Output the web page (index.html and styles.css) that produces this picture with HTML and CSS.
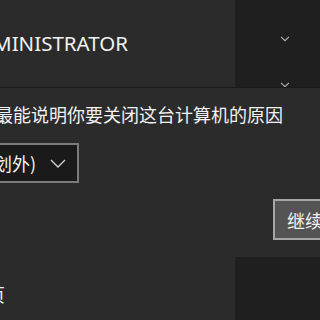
FILE: index.html
```html
<!DOCTYPE html>
<html lang="zh-CN">
<head>
  <meta charset="UTF-8" />
  <title>关闭 Windows</title>
  <link rel="stylesheet" href="styles.css">
</head>
<body>

  <div class="top">
    <div class="account">
      <span class="user-name">ADMINISTRATOR</span>
    </div>
    <div class="side">
      <svg class="chev" width="12" height="7" viewBox="0 0 12 7"><path d="M1 1 L6 6 L11 1" fill="none" stroke="#b5b5b5" stroke-width="1.3"/></svg>
      <svg class="chev" width="12" height="7" viewBox="0 0 12 7"><path d="M1 1 L6 6 L11 1" fill="none" stroke="#b5b5b5" stroke-width="1.3"/></svg>
    </div>
  </div>

  <div class="dialog">
    <p class="prompt">选择最能说明你要关闭这台计算机的原因</p>
    <div class="select">
      <span class="select-text">其他(计划外)</span>
      <svg width="16" height="9" viewBox="0 0 16 9"><path d="M1 1 L8 8 L15 1" fill="none" stroke="#cfcfcf" stroke-width="1.4"/></svg>
    </div>
    <div class="actions">
      <button class="btn">继续</button>
    </div>
  </div>

  <div class="bottom">
    <div class="account">
      <span class="page-label">页</span>
    </div>
  </div>

</body>
</html>
```

FILE: styles.css
```css
* { margin: 0; padding: 0; box-sizing: border-box; }
body {
  font-family: "Noto Sans", "Noto Sans CJK SC", sans-serif;
  background-color: #1f1f1f;
  color: white;
  height: 320px;
  overflow: hidden;
}
.top {
  height: 87px;
  display: flex;
}
.account {
  width: 235px;
  background-color: #2b2b2b;
  overflow: hidden;
}
.top .account {
  padding-top: 29px;
}
.user-name {
  display: block;
  margin-left: -35px;
  font-size: 20.5px;
  white-space: nowrap;
  color: #f2f2f2;
}
.side {
  flex: 1;
  display: flex;
  flex-direction: column;
  align-items: center;
  padding-top: 36px;
  gap: 40px;
  padding-left: 15px;
}
.dialog {
  height: 170px;
  background-color: #2b2b2b;
  border-top: 1px solid #1a1a1a;
  padding-top: 14px;
  overflow: hidden;
}
.prompt {
  margin-left: -41px;
  font-size: 18px;
  line-height: 24px;
  white-space: nowrap;
  color: #f2f2f2;
  font-family: "Noto Sans CJK SC", sans-serif;
}
.select {
  margin-top: 17px;
  margin-left: -80px;
  width: 159px;
  height: 40px;
  border: 2px solid #7b7b7b;
  background-color: #1a1a1a;
  display: flex;
  align-items: center;
  justify-content: flex-end;
  gap: 14px;
  padding-right: 11px;
}
.select-text {
  font-size: 18px;
  white-space: nowrap;
  font-family: "Noto Sans CJK SC", sans-serif;
  color: #f2f2f2;
}
.actions {
  display: flex;
  justify-content: flex-end;
  margin-top: 16px;
}
.btn {
  width: 47px;
  height: 41px;
  border: 2px solid #a5a5a5;
  border-right: none;
  background-color: #545454;
  color: #f2f2f2;
  font-size: 18px;
  text-align: left;
  padding-left: 12px;
  white-space: nowrap;
  overflow: hidden;
  font-family: "Noto Sans CJK SC", sans-serif;
}
.bottom {
  height: 63px;
}
.bottom .account {
  height: 100%;
  padding-top: 24px;
}
.page-label {
  display: block;
  margin-left: -13px;
  font-size: 18px;
  font-family: "Noto Sans CJK SC", sans-serif;
  color: #f2f2f2;
}
```
